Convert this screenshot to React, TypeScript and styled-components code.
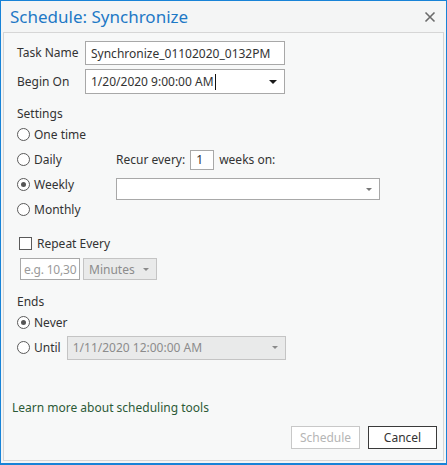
import React from "react";
import styled, { createGlobalStyle } from "styled-components";

const GlobalStyle = createGlobalStyle`
	html, body {
		margin: 0;
		padding: 0;
		background: #ffffff;
	}
	* {
		box-sizing: border-box;
	}
`;

const Window = styled.div`
	width: 447px;
	height: 465px;
	border: 1px solid #1883d7;
	border-bottom-width: 2px;
	background: #f4f5f5;
	display: flex;
	flex-direction: column;
	font-family: "Noto Sans", "Open Sans", sans-serif;
	font-size: 12px;
	color: #333333;
`;

const TitleBar = styled.div`
	height: 31px;
	display: flex;
	align-items: center;
	justify-content: space-between;
	padding: 0 10px 0 9px;
`;

const Title = styled.h1`
	margin: 0;
	font-size: 17px;
	font-weight: 400;
	color: #1e79c6;
`;

const CloseButton = styled.button`
	border: none;
	background: none;
	padding: 0;
	width: 12px;
	height: 12px;
	display: flex;
	cursor: pointer;
`;

const Panel = styled.div`
	flex: 1;
	margin: 0 2px 2px 2px;
	border: 1px solid #d6d6d6;
	background: #f7f8f8;
	display: flex;
	flex-direction: column;
	padding: 8px 6px 11px 13px;
`;

const FieldGrid = styled.div`
	display: grid;
	grid-template-columns: 68px 200px;
	row-gap: 4px;
	align-items: center;
`;

const Label = styled.span`
	line-height: 16px;
	white-space: nowrap;
`;

const SectionLabel = styled.div<{ top: number }>`
	margin-top: ${(p) => p.top}px;
	line-height: 16px;
`;

const TextBox = styled.div<{ w?: number; h?: number; disabled?: boolean; pad?: number }>`
	width: ${(p) => (p.w ? `${p.w}px` : "100%")};
	height: ${(p) => p.h ?? 24}px;
	border: 1px solid ${(p) => (p.disabled ? "#c4c4c4" : "#a8a8a8")};
	background: ${(p) => (p.disabled ? "#e9eaea" : "#ffffff")};
	color: ${(p) => (p.disabled ? "#8c8c8c" : "#333333")};
	display: flex;
	align-items: center;
	padding: 0 ${(p) => p.pad ?? 5}px;
	white-space: nowrap;
	overflow: hidden;
`;

const Placeholder = styled.span`
	color: #9a9a9a;
	letter-spacing: -0.2px;
`;

const Combo = styled(TextBox)`
	justify-content: space-between;
	padding-right: 7px;
`;

const Caret = styled.span`
	display: inline-block;
	width: 1px;
	height: 16px;
	background: #111;
	margin-left: 1px;
	vertical-align: middle;
`;

const Arrow = styled.span<{ size: number; color: string }>`
	width: 0;
	height: 0;
	border-left: ${(p) => p.size}px solid transparent;
	border-right: ${(p) => p.size}px solid transparent;
	border-top: ${(p) => p.size}px solid ${(p) => p.color};
	flex-shrink: 0;
`;

const SettingsArea = styled.div`
	display: flex;
`;

const RadioColumn = styled.div`
	width: 99px;
	display: flex;
	flex-direction: column;
`;

const OptionRow = styled.label<{ h?: number }>`
	height: ${(p) => p.h ?? 25}px;
	display: flex;
	align-items: center;
	gap: 4px;
	white-space: nowrap;
`;

const RadioDot = styled.span<{ checked?: boolean }>`
	width: 13px;
	height: 13px;
	border-radius: 50%;
	border: 1px solid #5a5a5a;
	background: #ffffff;
	display: flex;
	align-items: center;
	justify-content: center;
	flex-shrink: 0;
	&::after {
		content: "";
		width: 5px;
		height: 5px;
		border-radius: 50%;
		background: ${(p) => (p.checked ? "#555555" : "transparent")};
	}
`;

const CheckBox = styled.span`
	width: 13px;
	height: 13px;
	border: 1px solid #5a5a5a;
	background: #ffffff;
	margin-left: 2px;
	margin-right: 1px;
	flex-shrink: 0;
`;

const RecurColumn = styled.div`
	padding-top: 25px;
	display: flex;
	flex-direction: column;
	gap: 6px;
`;

const RecurRow = styled.div`
	height: 25px;
	display: flex;
	align-items: center;
	gap: 5px;
`;

const InlineRow = styled.div<{ top: number; gap: number; indent?: number }>`
	margin-top: ${(p) => p.top}px;
	padding-left: ${(p) => p.indent ?? 0}px;
	display: flex;
	align-items: center;
	gap: ${(p) => p.gap}px;
`;

const Spacer = styled.div`
	flex: 1;
`;

const LearnLink = styled.a`
	margin-left: -5px;
	line-height: 16px;
	color: #2c5a37;
	text-decoration: none;
	cursor: pointer;
`;

const ButtonRow = styled.div`
	margin-top: 10px;
	display: flex;
	justify-content: flex-end;
	gap: 8px;
`;

const Button = styled.button<{ disabled?: boolean }>`
	width: 69px;
	height: 23px;
	font-family: inherit;
	font-size: 12px;
	background: #ffffff;
	border: 1px solid ${(p) => (p.disabled ? "#c8c8c8" : "#3a3a3a")};
	color: ${(p) => (p.disabled ? "#b5b5b5" : "#333333")};
	padding: 0;
`;

export default function App() {
	return (
		<>
			<GlobalStyle />
			<Window>
				<TitleBar>
					<Title>Schedule: Synchronize</Title>
					<CloseButton aria-label="Close">
						<svg width="12" height="12" viewBox="0 0 12 12">
							<path d="M1.5 1.5 L10.5 10.5 M10.5 1.5 L1.5 10.5" stroke="#6b6b6b" strokeWidth="1.6" />
						</svg>
					</CloseButton>
				</TitleBar>
				<Panel>
					<FieldGrid>
						<Label>Task Name</Label>
						<TextBox>Synchronize_01102020_0132PM</TextBox>
						<Label>Begin On</Label>
						<Combo h={25}>
							<span>
								1/20/2020 9:00:00 AM
								<Caret />
							</span>
							<Arrow size={4} color="#1a1a1a" />
						</Combo>
					</FieldGrid>

					<SectionLabel top={12}>Settings</SectionLabel>
					<SettingsArea>
						<RadioColumn>
							<OptionRow>
								<RadioDot />
								One time
							</OptionRow>
							<OptionRow>
								<RadioDot />
								Daily
							</OptionRow>
							<OptionRow>
								<RadioDot checked />
								Weekly
							</OptionRow>
							<OptionRow>
								<RadioDot />
								Monthly
							</OptionRow>
						</RadioColumn>
						<RecurColumn>
							<RecurRow>
								<Label>Recur every:</Label>
								<TextBox w={24} h={20}>
									1
								</TextBox>
								<Label>weeks on:</Label>
							</RecurRow>
							<Combo w={264} h={22}>
								<span />
								<Arrow size={3} color="#777777" />
							</Combo>
						</RecurColumn>
					</SettingsArea>

					<InlineRow top={11} gap={4}>
						<OptionRow h={20}>
							<CheckBox />
							Repeat Every
						</OptionRow>
					</InlineRow>
					<InlineRow top={5} gap={3} indent={3}>
						<TextBox w={60} h={22} pad={3}>
							<Placeholder>e.g. 10,30</Placeholder>
						</TextBox>
						<Combo w={74} h={22} disabled>
							<span>Minutes</span>
							<Arrow size={3} color="#8a8a8a" />
						</Combo>
					</InlineRow>

					<SectionLabel top={14}>Ends</SectionLabel>
					<OptionRow>
						<RadioDot checked />
						Never
					</OptionRow>
					<InlineRow top={0} gap={6}>
						<OptionRow>
							<RadioDot />
							Until
						</OptionRow>
						<Combo w={219} h={24} disabled>
							<span>1/11/2020 12:00:00 AM</span>
							<Arrow size={3.5} color="#8a8a8a" />
						</Combo>
					</InlineRow>

					<Spacer />
					<LearnLink>Learn more about scheduling tools</LearnLink>
					<ButtonRow>
						<Button disabled>Schedule</Button>
						<Button>Cancel</Button>
					</ButtonRow>
				</Panel>
			</Window>
		</>
	);
}
